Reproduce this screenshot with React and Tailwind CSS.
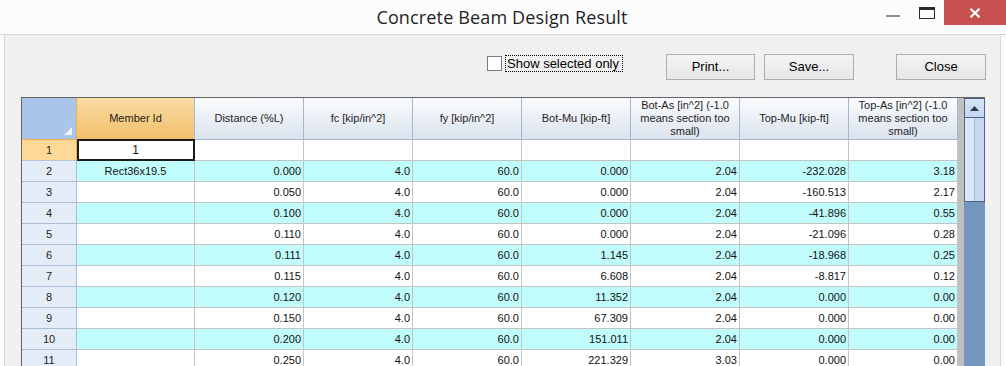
import React from "react"

const headers = [
  "Member Id",
  "Distance (%L)",
  "fc [kip/in^2]",
  "fy [kip/in^2]",
  "Bot-Mu [kip-ft]",
  ["Bot-As [in^2] (-1.0", "means section too", "small)"],
  "Top-Mu [kip-ft]",
  ["Top-As [in^2] (-1.0", "means section too", "small)"],
]

const rows = [
  ["1", "", "", "", "", "", "", ""],
  ["Rect36x19.5", "0.000", "4.0", "60.0", "0.000", "2.04", "-232.028", "3.18"],
  ["", "0.050", "4.0", "60.0", "0.000", "2.04", "-160.513", "2.17"],
  ["", "0.100", "4.0", "60.0", "0.000", "2.04", "-41.896", "0.55"],
  ["", "0.110", "4.0", "60.0", "0.000", "2.04", "-21.096", "0.28"],
  ["", "0.111", "4.0", "60.0", "1.145", "2.04", "-18.968", "0.25"],
  ["", "0.115", "4.0", "60.0", "6.608", "2.04", "-8.817", "0.12"],
  ["", "0.120", "4.0", "60.0", "11.352", "2.04", "0.000", "0.00"],
  ["", "0.150", "4.0", "60.0", "67.309", "2.04", "0.000", "0.00"],
  ["", "0.200", "4.0", "60.0", "151.011", "2.04", "0.000", "0.00"],
  ["", "0.250", "4.0", "60.0", "221.329", "3.03", "0.000", "0.00"],
  ["", "0.300", "4.0", "60.0", "282.114", "3.88", "0.000", "0.00"],
]

function WinButton({ children, className }) {
  return (
    <button
      className={
        "h-[26px] border border-[#adadad] bg-gradient-to-b from-[#f4f4f4] to-[#e6e6e6] text-[13px] text-black flex items-center justify-center " +
        className
      }
    >
      {children}
    </button>
  )
}

function HeaderCell({ label, selected }) {
  const lines = Array.isArray(label) ? label : [label]
  return (
    <div
      className={
        "h-[42px] border-r border-b flex flex-col items-center justify-center text-center leading-[13px] text-[11px] text-[#1e1e1e] " +
        (selected
          ? "bg-gradient-to-b from-[#f9dca4] to-[#f1bf68] border-r-[#a9bcd3] border-b-[#f0a848]"
          : "bg-gradient-to-b from-[#fbfcfe] to-[#dbe3ee] border-[#a3b7cf]")
      }
    >
      {lines.map((l, i) => (
        <span key={i}>{l}</span>
      ))}
    </div>
  )
}

export default function App() {
  return (
    <div
      className="w-[1006px] h-[366px] overflow-hidden bg-[#fcfcfc] flex flex-col"
      style={{ fontFamily: '"Liberation Sans", Arial, sans-serif' }}
    >
      {/* title bar */}
      <div className="relative h-[35px] shrink-0 flex items-center justify-center border-b border-[#d5d5d5]">
        <span
          className="text-[18px] text-[#1f1f1f] tracking-[0.15px] pr-[2px]"
          style={{ fontFamily: '"Open Sans", "Noto Sans", sans-serif' }}
        >
          Concrete Beam Design Result
        </span>
        <div className="absolute top-0 right-0 flex items-start h-[25px]">
          <div className="w-[14px] h-[2px] bg-[#8e8e8e] mt-[15px] mr-[19px]" />
          <div className="w-[16px] h-[12px] border border-[#2b2b2b] border-t-[3px] mt-[7px] mr-[9px]" />
          <div className="w-[62px] h-[25px] bg-[#c75050] flex items-center justify-center">
            <svg width="12" height="10" viewBox="0 0 12 10">
              <path d="M1.5 0.8 L10.5 9.2 M10.5 0.8 L1.5 9.2" stroke="#fff" strokeWidth="2.2" />
            </svg>
          </div>
        </div>
      </div>

      {/* body */}
      <div className="flex-1 ml-[4px] mr-[5px] border-l border-r border-[#d9d9d9] bg-[#f0f0f0] pl-[16px]">
        <div className="flex items-start pt-[19px]">
          <div className="w-[645px] flex items-center justify-end pr-[43px] mt-[1px]">
            <div className="w-[15px] h-[15px] border border-[#767c86] bg-white" />
            <span className="ml-[3px] w-[118px] h-[17px] px-[1px] border border-dotted border-black text-[13px] leading-[15px] text-black whitespace-nowrap">
              Show selected only
            </span>
          </div>
          <WinButton className="w-[89px]">Print...</WinButton>
          <WinButton className="w-[90px] ml-[9px]">Save...</WinButton>
          <WinButton className="w-[90px] ml-[42px]">Close</WinButton>
        </div>

        {/* grid */}
        <div className="mt-[17px] flex w-[964px] border-l border-t border-[#646464] bg-white">
          <div className="grid grid-cols-[55px_118px_repeat(7,109px)]">
            <div className="h-[42px] bg-[#a9c5ea] border-r border-b border-[#f0a848] relative">
              <svg className="absolute right-[4px] bottom-[4px]" width="8" height="8" viewBox="0 0 8 8">
                <path d="M8 0 L8 8 L0 8 Z" fill="#eef3fa" />
              </svg>
            </div>
            {headers.map((h, i) => (
              <HeaderCell key={i} label={h} selected={i === 0} />
            ))}

            {rows.map((r, ri) => {
              const n = ri + 1
              const cyan = n % 2 === 0
              return (
                <React.Fragment key={ri}>
                  <div
                    className={
                      "h-[21px] border-r border-b flex items-center justify-center text-[11px] text-[#1e1e1e] " +
                      (n === 1
                        ? "bg-[#fdd897] border-r-[#f0a848] border-b-[#b3c3d8]"
                        : "bg-[#e4ecf7] border-[#a9bcd5]")
                    }
                  >
                    {n}
                  </div>
                  {r.map((v, ci) => (
                    <div
                      key={ci}
                      className={
                        "relative h-[21px] border-r border-b border-[#c4c4c4] flex items-center text-[11px] text-[#111] " +
                        (ci === 0 ? "justify-center " : "justify-end pr-[2px] ") +
                        (cyan ? "bg-[#c1fcfc]" : "bg-white")
                      }
                    >
                      {n === 1 && ci === 0 ? (
                        <>
                          <div className="absolute -top-px left-0 -right-px -bottom-px border-2 border-[#1a1a1a]" />
                          <span className="text-[12px]">{v}</span>
                        </>
                      ) : (
                        v
                      )}
                    </div>
                  ))}
                </React.Fragment>
              )
            })}
          </div>

          <div className="w-[6px] bg-[#c0c0c0]" />

          {/* scrollbar */}
          <div className="w-[21px] bg-[#7396bf] flex flex-col">
            <div className="h-[20px] border border-[#4e6288] bg-gradient-to-b from-[#d6e3f6] to-[#c3d5ef] flex items-center justify-center">
              <svg width="9" height="5" viewBox="0 0 9 5">
                <path d="M0 5 L4.5 0 L9 5 Z" fill="#2c3b54" />
              </svg>
            </div>
            <div className="h-[84px] border border-t-0 border-[#4e6288] flex">
              <div className="flex-1 bg-[#dae7f8] border-r border-[#a7bcda]" />
              <div className="flex-1 bg-[#c7d8f0]" />
            </div>
          </div>
        </div>
      </div>
    </div>
  )
}
